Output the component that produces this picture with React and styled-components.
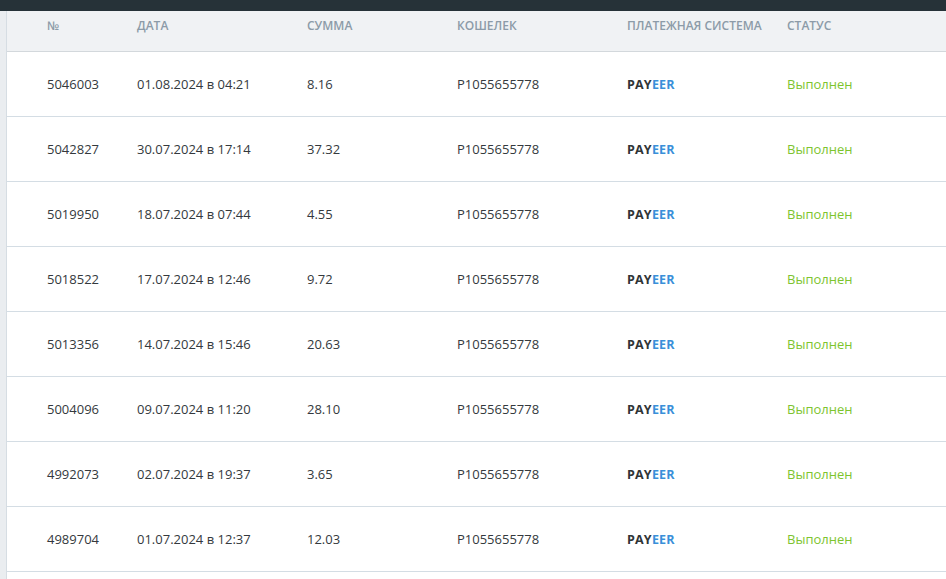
import styled, { createGlobalStyle } from 'styled-components';

const GlobalStyle = createGlobalStyle`
  html, body {
    margin: 0;
    padding: 0;
    background: #fff;
    font-family: "Open Sans", "Liberation Sans", sans-serif;
  }
`;

const TopBar = styled.div`
  height: 11px;
  background: #263238;
`;

const Layout = styled.div`
  display: flex;
  min-height: 568px;
`;

const SideStrip = styled.div`
  width: 6px;
  flex-shrink: 0;
  background: #eaedf0;
  border-right: 1px solid #d6dde3;
`;

const Table = styled.div`
  flex: 1;
`;

const Row = styled.div`
  display: grid;
  grid-template-columns: 90px 170px 150px 170px 160px 1fr;
  align-items: ${(p) => (p.$head ? 'start' : 'center')};
  padding-left: 40px;
  padding-top: ${(p) => (p.$head ? '7px' : '0')};
  box-sizing: border-box;
  height: ${(p) => (p.$head ? '41px' : '65px')};
  background: ${(p) => (p.$head ? '#f0f2f4' : '#fff')};
  border-bottom: 1px solid ${(p) => (p.$head ? '#d3d8dc' : '#d4dde4')};
`;

const HeadCell = styled.div`
  font-size: 12px;
  line-height: 16px;
  font-weight: 600;
  color: #8c9ba8;
  text-transform: uppercase;
  white-space: nowrap;
`;

const Cell = styled.div`
  font-size: 13px;
  color: ${(p) => p.$color || '#34393d'};
  white-space: nowrap;
`;

const Payeer = styled.span`
  font-size: 12.5px;
  font-weight: 700;
  color: #2f3437;
  letter-spacing: 0.2px;
  span {
    color: #3a8fd9;
  }
`;

const rows = [
  ['5046003', '01.08.2024 в 04:21', '8.16'],
  ['5042827', '30.07.2024 в 17:14', '37.32'],
  ['5019950', '18.07.2024 в 07:44', '4.55'],
  ['5018522', '17.07.2024 в 12:46', '9.72'],
  ['5013356', '14.07.2024 в 15:46', '20.63'],
  ['5004096', '09.07.2024 в 11:20', '28.10'],
  ['4992073', '02.07.2024 в 19:37', '3.65'],
  ['4989704', '01.07.2024 в 12:37', '12.03'],
];

const App = () => (
  <>
    <GlobalStyle />
    <TopBar />
    <Layout>
      <SideStrip />
      <Table>
        <Row $head>
          <HeadCell>№</HeadCell>
          <HeadCell>Дата</HeadCell>
          <HeadCell>Сумма</HeadCell>
          <HeadCell>Кошелек</HeadCell>
          <HeadCell>Платежная система</HeadCell>
          <HeadCell>Статус</HeadCell>
        </Row>
        {rows.map(([id, date, sum]) => (
          <Row key={id}>
            <Cell>{id}</Cell>
            <Cell>{date}</Cell>
            <Cell>{sum}</Cell>
            <Cell>P1055655778</Cell>
            <Cell>
              <Payeer>
                PAY<span>EER</span>
              </Payeer>
            </Cell>
            <Cell $color="#7dc42f">Выполнен</Cell>
          </Row>
        ))}
      </Table>
    </Layout>
  </>
);

export default App;
